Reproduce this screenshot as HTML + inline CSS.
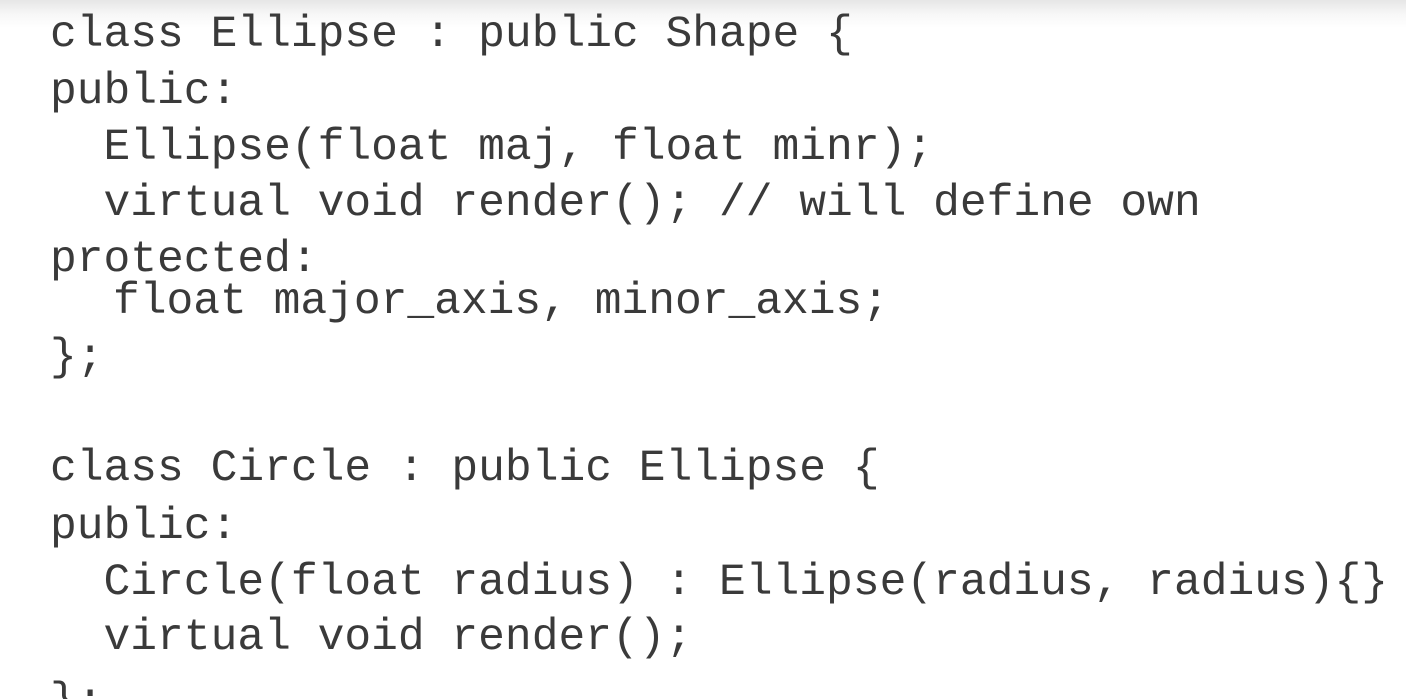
<!DOCTYPE html>
<html><head><style>
html,body{margin:0;padding:0;width:1406px;height:699px;overflow:hidden;background:#fff}
body{position:relative;background:linear-gradient(#e6e6e6 0px,#f7f7f7 14px,#fff 28px,#fff);font-family:"Liberation Mono",monospace;color:#3a3a3a}
.l{position:absolute;font-size:44.6px;line-height:56px;white-space:pre;height:56px}
</style></head><body>
<div class="l" style="left:50px;top:7px">class Ellipse : public Shape {</div>
<div class="l" style="left:50px;top:64px">public:</div>
<div class="l" style="left:50px;top:120px">  Ellipse(float maj, float minr);</div>
<div class="l" style="left:50px;top:176px">  virtual void render(); // will define own</div>
<div class="l" style="left:50px;top:232px">protected:</div>
<div class="l" style="left:113px;top:274px">float major_axis, minor_axis;</div>
<div class="l" style="left:50px;top:330px">};</div>
<div class="l" style="left:50px;top:441px">class Circle : public Ellipse {</div>
<div class="l" style="left:50px;top:499px">public:</div>
<div class="l" style="left:50px;top:555px">  Circle(float radius) : Ellipse(radius, radius){}</div>
<div class="l" style="left:50px;top:610px">  virtual void render();</div>
<div class="l" style="left:50px;top:674px">};</div>
</body></html>
